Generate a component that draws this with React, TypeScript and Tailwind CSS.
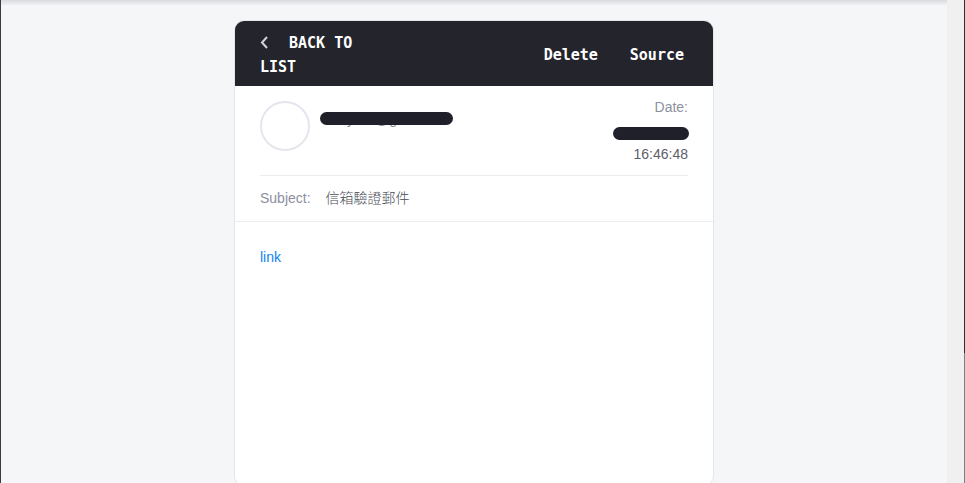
import React from 'react';

function BackIcon() {
  return (
    <svg className="mr-5 inline-block align-[-1px]" width="9" height="13" viewBox="0 0 9 13" fill="none" aria-hidden="true">
      <path d="M7 1 2 6.5 7 12" stroke="#d2d2d8" strokeWidth="2" />
    </svg>
  );
}

function Toolbar() {
  return (
    <div className="flex items-center justify-between bg-[#24242d] pt-[10px] pr-[29px] pb-[7px] pl-[25px] font-['DejaVu_Sans_Mono',monospace] text-[15px] leading-6 font-bold text-white">
      <button type="button" className="w-32 text-left uppercase">
        <BackIcon />
        Back to List
      </button>
      <div className="flex gap-8">
        <button type="button">Delete</button>
        <button type="button">Source</button>
      </div>
    </div>
  );
}

function Sender() {
  return (
    <div className="flex gap-[10px]">
      <div className="size-[50px] rounded-full border-2 border-[#e5e5ee]" />
      <div className="relative mt-[11px] h-[18px] w-[133px] leading-4 text-[#8b8d9b]">
        <span className="absolute -top-px left-[27px]">y</span>
        <span className="absolute -top-px left-[55px]">@g</span>
        <span className="absolute top-0 left-0 h-[13px] w-full rounded-full bg-[#20202a]" />
      </div>
    </div>
  );
}

export default function App() {
  return (
    <div className="flex h-screen overflow-hidden border-l border-[#3b3c40] bg-[#f5f6f8] font-['Liberation_Sans','Noto_Sans_CJK_TC',sans-serif] text-sm">
      <main className="min-w-0 flex-1 bg-linear-to-b from-[#d9dadd] to-[#f5f6f8] to-[6px] px-4 pt-5">
        <article className="mx-auto max-w-[480px] overflow-hidden rounded-[10px] border border-[#e4e6ec] bg-white">
          <Toolbar />
          <header>
            <div className="mx-[25px] flex items-start justify-between border-b border-[#ececee] pt-[15px] pb-[10px]">
              <Sender />
              <div className="flex flex-col items-end">
                <span className="leading-3 text-[#8d90a0]">Date:</span>
                <span className="mt-[14px] -mr-px h-[13px] w-[76px] rounded-full bg-[#20202a]" />
                <span className="mt-1 leading-[21px] text-[#5c5e69]">16:46:48</span>
              </div>
            </div>
            <div className="flex gap-[15px] border-b border-[#ececee] px-[25px] py-3 leading-[21px]">
              <span className="text-[#8d90a0]">Subject:</span>
              <span className="font-light text-[#4a4c57]">信箱驗證郵件</span>
            </div>
          </header>
          <div className="min-h-[263px] px-[25px] pt-[25px] leading-[21px]">
            <a href="#link" className="text-[#0f82f0]">link</a>
          </div>
        </article>
      </main>
      <div className="w-[17px] bg-[#f0f0f0]" />
      <div className="flex w-px flex-col">
        <div className="h-[353px] bg-[#303034]" />
        <div className="flex-1 bg-[#6d8b7b]" />
      </div>
    </div>
  );
}
